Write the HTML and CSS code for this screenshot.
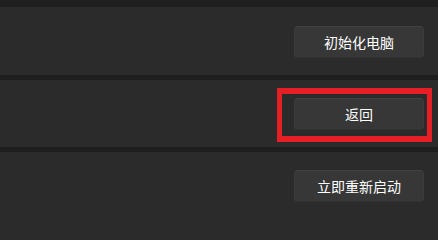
FILE: index.html
```html
<!DOCTYPE html>
<html lang="zh-CN">
<head>
<meta charset="utf-8">
<link rel="stylesheet" href="styles.css">
</head>
<body>
<div class="page">
  <div class="card card-first">
    <button class="btn">初始化电脑</button>
  </div>
  <div class="card">
    <div class="btn-wrap">
      <button class="btn">返回</button>
      <div class="highlight"></div>
    </div>
  </div>
  <div class="card card-last">
    <button class="btn">立即重新启动</button>
  </div>
</div>
</body>
</html>
```
FILE: styles.css
```css
html, body {
  margin: 0;
  padding: 0;
  background: #1f1f1f;
}
.page {
  width: 438px;
  padding-top: 7px;
  box-sizing: border-box;
  display: flex;
  flex-direction: column;
  gap: 5px;
}
.card {
  background: #2b2b2b;
  height: 67px;
  flex: none;
  display: flex;
  align-items: center;
  justify-content: flex-end;
  padding-right: 14px;
  padding-top: 1px;
  box-sizing: border-box;
}
.card-first {
  height: 68px;
  padding-top: 2px;
}
.card-last {
  height: 100px;
  align-items: flex-start;
  padding-top: 18px;
}
.btn-wrap {
  position: relative;
  display: flex;
}
.btn {
  width: 130px;
  height: 32px;
  background: #373737;
  border: 1px solid #3c3c3c;
  border-top-color: #414141;
  border-bottom-color: #333333;
  border-radius: 4px;
  color: #ffffff;
  font-family: "Noto Sans CJK SC", "Noto Sans", sans-serif;
  font-size: 14px;
  line-height: 20px;
  padding: 0;
  box-sizing: border-box;
}
.highlight {
  position: absolute;
  top: -10px;
  left: -17px;
  right: -8px;
  bottom: -12px;
  border: 5px solid #e61e25;
  border-top-width: 6px;
  border-bottom-width: 6px;
}
```
